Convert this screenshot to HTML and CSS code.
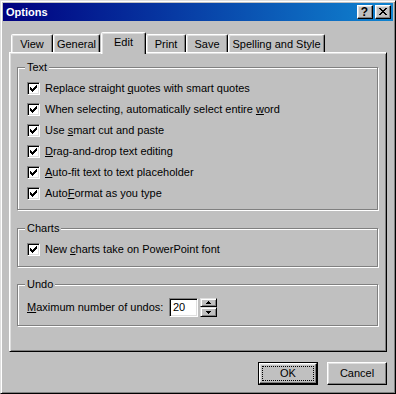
FILE: index.html
```
<!DOCTYPE html>
<html>
<head>
<meta charset="utf-8">
<link rel="stylesheet" href="styles.css">
</head>
<body>
<div class="window">
  <div class="titlebar">
    <span class="title">Options</span>
    <div class="tbtns">
      <span class="tbtn help">?</span>
      <span class="tbtn"><svg class="xicon" viewBox="0 0 8 7" width="8" height="7"><path d="M0 0h2v1h-2z M6 0h2v1h-2z M1 1h2v1h-2z M5 1h2v1h-2z M2 2h4v1h-4z M3 3h2v1h-2z M2 4h4v1h-4z M1 5h2v1h-2z M5 5h2v1h-2z M0 6h2v1h-2z M6 6h2v1h-2z" fill="#000"/></svg></span>
    </div>
  </div>
  <div class="content">
    <div class="tabs">
      <div class="tab t-view">View</div>
      <div class="tab t-general">General</div>
      <div class="tab t-edit active">Edit</div>
      <div class="tab t-print">Print</div>
      <div class="tab t-save">Save</div>
      <div class="tab t-spell">Spelling and Style</div>
    </div>
    <div class="panel">
      <fieldset class="group g-text">
        <legend>Text</legend>
        <div class="row"><span class="cb"><svg viewBox="0 0 7 7" width="7" height="7"><path d="M0 2h1v3h-1z M1 3h1v3h-1z M2 4h1v3h-1z M3 3h1v3h-1z M4 2h1v3h-1z M5 1h1v3h-1z M6 0h1v3h-1z" fill="#000"/></svg></span><span class="lbl">Replace straight <u>q</u>uotes with smart quotes</span></div>
        <div class="row"><span class="cb"><svg viewBox="0 0 7 7" width="7" height="7"><path d="M0 2h1v3h-1z M1 3h1v3h-1z M2 4h1v3h-1z M3 3h1v3h-1z M4 2h1v3h-1z M5 1h1v3h-1z M6 0h1v3h-1z" fill="#000"/></svg></span><span class="lbl">When selecting, automatically select entire <u>w</u>ord</span></div>
        <div class="row"><span class="cb"><svg viewBox="0 0 7 7" width="7" height="7"><path d="M0 2h1v3h-1z M1 3h1v3h-1z M2 4h1v3h-1z M3 3h1v3h-1z M4 2h1v3h-1z M5 1h1v3h-1z M6 0h1v3h-1z" fill="#000"/></svg></span><span class="lbl">Use <u>s</u>mart cut and paste</span></div>
        <div class="row"><span class="cb"><svg viewBox="0 0 7 7" width="7" height="7"><path d="M0 2h1v3h-1z M1 3h1v3h-1z M2 4h1v3h-1z M3 3h1v3h-1z M4 2h1v3h-1z M5 1h1v3h-1z M6 0h1v3h-1z" fill="#000"/></svg></span><span class="lbl"><u>D</u>rag-and-drop text editing</span></div>
        <div class="row"><span class="cb"><svg viewBox="0 0 7 7" width="7" height="7"><path d="M0 2h1v3h-1z M1 3h1v3h-1z M2 4h1v3h-1z M3 3h1v3h-1z M4 2h1v3h-1z M5 1h1v3h-1z M6 0h1v3h-1z" fill="#000"/></svg></span><span class="lbl"><u>A</u>uto-fit text to text placeholder</span></div>
        <div class="row"><span class="cb"><svg viewBox="0 0 7 7" width="7" height="7"><path d="M0 2h1v3h-1z M1 3h1v3h-1z M2 4h1v3h-1z M3 3h1v3h-1z M4 2h1v3h-1z M5 1h1v3h-1z M6 0h1v3h-1z" fill="#000"/></svg></span><span class="lbl">Auto<u>F</u>ormat as you type</span></div>
      </fieldset>
      <fieldset class="group g-charts">
        <legend>Charts</legend>
        <div class="row"><span class="cb"><svg viewBox="0 0 7 7" width="7" height="7"><path d="M0 2h1v3h-1z M1 3h1v3h-1z M2 4h1v3h-1z M3 3h1v3h-1z M4 2h1v3h-1z M5 1h1v3h-1z M6 0h1v3h-1z" fill="#000"/></svg></span><span class="lbl">New <u>c</u>harts take on PowerPoint font</span></div>
      </fieldset>
      <fieldset class="group g-undo">
        <legend>Undo</legend>
        <div class="urow">
          <span class="ulabel"><u>M</u>aximum number of undos:</span>
          <span class="edit">20</span>
          <span class="spin">
            <span class="sb sb-up"><svg viewBox="0 0 5 3" width="5" height="3"><path d="M2 0h1v1h-1z M1 1h3v1h-3z M0 2h5v1h-5z" fill="#000"/></svg></span>
            <span class="sb sb-down"><svg viewBox="0 0 5 3" width="5" height="3"><path d="M0 0h5v1h-5z M1 1h3v1h-3z M2 2h1v1h-1z" fill="#000"/></svg></span>
          </span>
        </div>
      </fieldset>
    </div>
    <div class="buttons">
      <div class="btn default"><div class="face"><span class="focus">OK</span></div></div>
      <div class="btn">Cancel</div>
    </div>
  </div>
</div>
</body>
</html>
```
FILE: styles.css
```
html, body {
  margin: 0;
  padding: 0;
  background: #c0c0c0;
}
body {
  font-family: "Liberation Sans", Arial, sans-serif;
  font-size: 11px;
  line-height: 13px;
  color: #000;
}
.window {
  width: 396px;
  height: 394px;
  box-sizing: border-box;
  background: #c0c0c0;
  border: 1px solid;
  border-color: #dfdfdf #000 #000 #dfdfdf;
  box-shadow: inset 1px 1px #fff, inset -1px -1px #808080;
  padding: 2px;
  display: flex;
  flex-direction: column;
}
.titlebar {
  height: 18px;
  flex: none;
  display: flex;
  align-items: center;
  justify-content: space-between;
  background: linear-gradient(to right, #000080, #1084d0);
  padding: 0 2px 0 3px;
}
.title {
  color: #fff;
  font-weight: bold;
}
.tbtns {
  display: flex;
  gap: 2px;
}
.tbtn {
  width: 16px;
  height: 14px;
  box-sizing: border-box;
  border: 1px solid;
  border-color: #fff #000 #000 #fff;
  box-shadow: inset -1px -1px #808080, inset 1px 1px #dfdfdf;
  background: #c0c0c0;
  display: flex;
  align-items: center;
  justify-content: center;
}
.help {
  font-weight: bold;
  font-size: 12px;
  line-height: 12px;
  padding-right: 1px;
}
.xicon {
  display: block;
  margin: 0 1px 1px 0;
}
.content {
  flex: 1;
  display: flex;
  flex-direction: column;
  padding: 0 6px;
}
.tabs {
  display: flex;
  align-items: flex-end;
  height: 20px;
  margin-top: 11px;
  padding-left: 2px;
}
.tab {
  height: 18px;
  box-sizing: border-box;
  border: 1px solid;
  border-bottom: none;
  border-color: #fff #000 transparent #fff;
  border-radius: 2px 2px 0 0;
  box-shadow: inset -1px 0 #808080, inset 1px 1px #dfdfdf;
  display: flex;
  justify-content: center;
  align-items: flex-start;
  padding-top: 3px;
  white-space: nowrap;
  background: #c0c0c0;
}
.tab.active {
  height: 22px;
  margin-bottom: -2px;
  position: relative;
  z-index: 1;
}
.t-view { width: 42px; }
.t-general { width: 47px; margin-right: 1px; }
.t-edit { width: 45px; }
.t-print { width: 40px; }
.t-save { width: 42px; }
.t-spell { width: 97px; }
.panel {
  height: 300px;
  box-sizing: border-box;
  border: 1px solid;
  border-color: #fff #000 #000 #fff;
  box-shadow: inset 1px 1px #dfdfdf, inset -1px -1px #808080;
  padding: 8px 8px 0 7px;
  display: flex;
  flex-direction: column;
}
.group {
  margin: 0;
  min-width: 0;
  border: 1px solid #808080;
  box-shadow: inset 1px 1px #fff, 1px 1px #fff;
  padding: 4px 8px 5px 9px;
}
.group legend {
  padding: 0 2px;
  margin-left: -2px;
  line-height: 13px;
  background: #c0c0c0;
}
.g-charts {
  margin-top: 12px;
  padding-bottom: 6px;
}
.g-undo {
  margin-top: 11px;
  padding-top: 7px;
  padding-bottom: 8px;
}
.row {
  display: flex;
  align-items: center;
  height: 21px;
}
.cb {
  width: 13px;
  height: 13px;
  flex: none;
  box-sizing: border-box;
  border: 1px solid;
  border-color: #808080 #fff #fff #808080;
  box-shadow: inset 1px 1px #000, inset -1px -1px #dfdfdf;
  background: #fff;
  padding: 2px;
  margin-right: 5px;
  display: flex;
}
.cb svg {
  display: block;
}
.lbl {
  white-space: nowrap;
}
.urow {
  display: flex;
  align-items: center;
  height: 19px;
}
.ulabel {
  width: 142px;
  white-space: nowrap;
}
.edit {
  width: 29px;
  height: 19px;
  box-sizing: border-box;
  border: 1px solid;
  border-color: #808080 #fff #fff #808080;
  box-shadow: inset 1px 1px #000, inset -1px -1px #dfdfdf;
  background: #fff;
  padding: 0 3px;
  line-height: 17px;
}
.spin {
  margin-left: 2px;
  width: 17px;
  height: 19px;
  display: flex;
  flex-direction: column;
}
.sb {
  box-sizing: border-box;
  border: 1px solid;
  border-color: #dfdfdf #000 #000 #dfdfdf;
  box-shadow: inset 1px 1px #fff, inset -1px -1px #808080;
  display: flex;
  align-items: center;
  justify-content: center;
}
.sb svg { display: block; }
.sb-up { height: 9px; }
.sb-down { height: 10px; }
.buttons {
  display: flex;
  justify-content: flex-end;
  gap: 9px;
  margin-top: 10px;
}
.btn {
  width: 60px;
  height: 23px;
  box-sizing: border-box;
  border: 1px solid;
  border-color: #fff #000 #000 #fff;
  box-shadow: inset -1px -1px #808080, inset 1px 1px #dfdfdf;
  display: flex;
  align-items: center;
  justify-content: center;
}
.btn.default {
  border: 1px solid #000;
  box-shadow: none;
  align-items: stretch;
  justify-content: stretch;
}
.face {
  flex: 1;
  box-sizing: border-box;
  border: 1px solid;
  border-color: #fff #000 #000 #fff;
  box-shadow: inset -1px -1px #808080, inset 1px 1px #dfdfdf;
  padding: 2px;
  display: flex;
}
.focus {
  flex: 1;
  border: 1px dotted #000;
  display: flex;
  align-items: center;
  justify-content: center;
}
```
